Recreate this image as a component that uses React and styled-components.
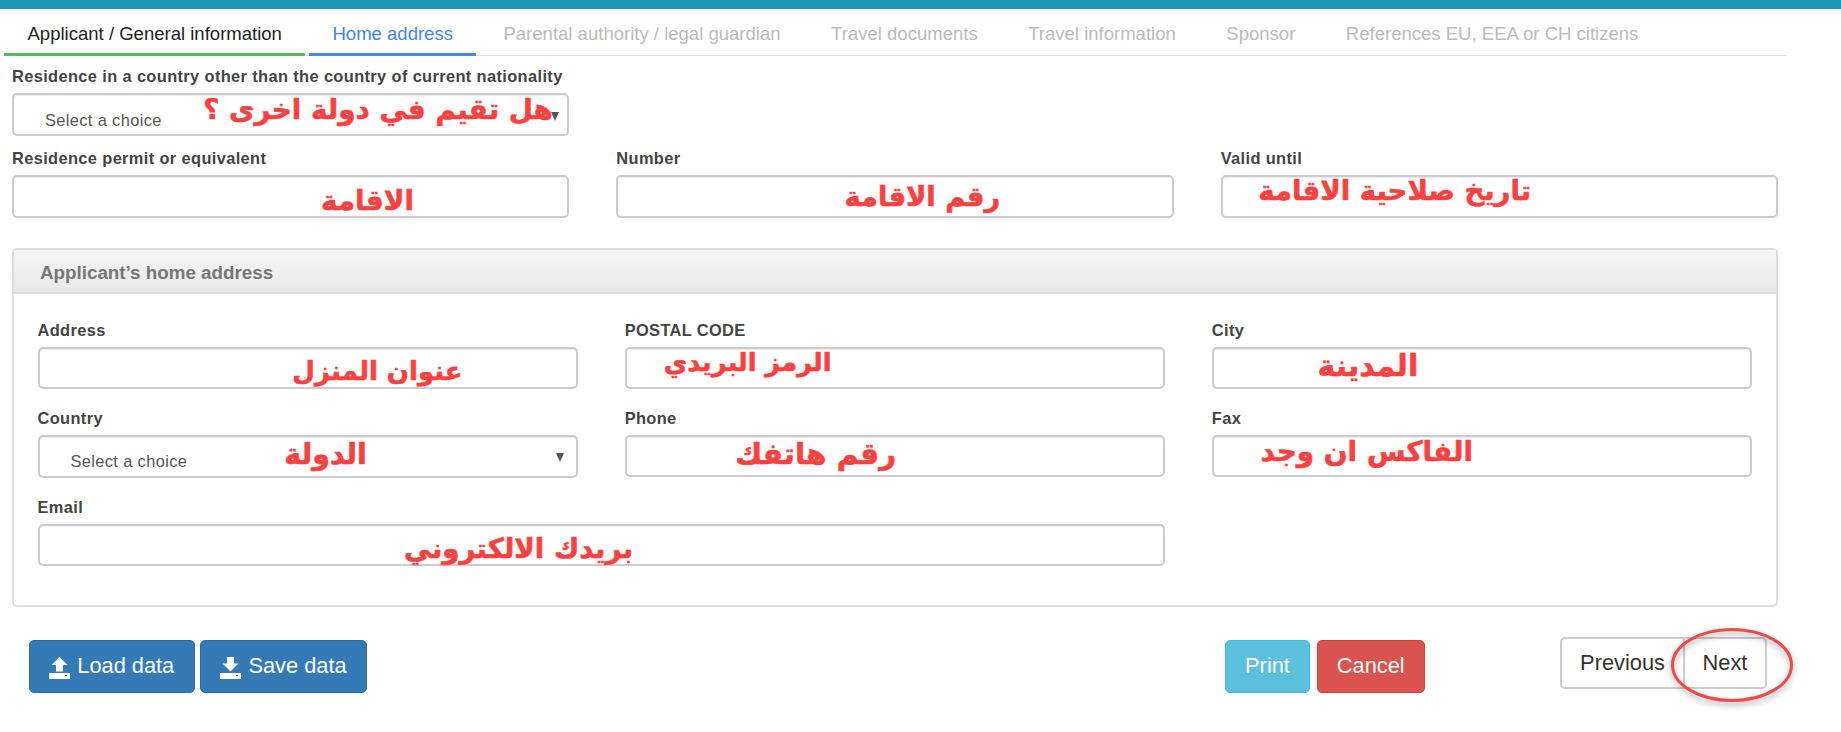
import React from "react";
import styled, { createGlobalStyle } from "styled-components";

const GlobalStyle = createGlobalStyle`
  html, body {
    margin: 0;
    padding: 0;
    background: #fff;
    font-family: "Liberation Sans", Arial, sans-serif;
  }
  * {
    box-sizing: border-box;
  }
`;

const TopBar = styled.div`
  height: 9px;
  background: #1a96b8;
`;

const Tabs = styled.ul`
  display: flex;
  gap: 3.5px;
  list-style: none;
  margin: 0 0 0 4px;
  padding: 0;
  width: 1782px;
  height: 46.5px;
  border-bottom: 1.5px solid #ddd;
`;

const Tab = styled.li`
  height: 47px;
  padding: 0 23.5px;
  font-size: 18.55px;
  line-height: 50px;
  white-space: nowrap;
  border-bottom: 3px solid ${(p) => p.$line || "transparent"};
  color: ${(p) => p.$color || "#bbb"};
`;

const Form = styled.form`
  display: block;
  padding: 10.5px 63px 30px 12px;
`;

const Label = styled.label`
  display: block;
  height: 20px;
  margin-bottom: 7px;
  font-size: 16.4px;
  line-height: 20px;
  font-weight: bold;
  letter-spacing: 0.37px;
  color: #444;
  white-space: nowrap;
`;

const Grid = styled.div`
  display: grid;
  grid-template-columns: repeat(3, 1fr);
  column-gap: 47px;
  row-gap: ${(p) => p.$rowGap || 30}px;
`;

const Field = styled.div`
  grid-column: span ${(p) => p.$span || 1};
  min-width: 0;
`;

const InputWrap = styled.div`
  position: relative;
`;

const Input = styled.input`
  display: block;
  width: 100%;
  height: 42.5px;
  padding: 0 14px;
  border: 2px solid #ccc;
  border-radius: 5px;
  background: #fff;
  outline: none;
  box-shadow: inset 0 1px 1px rgba(0, 0, 0, 0.075);
`;

const Select = styled.select`
  display: block;
  width: 100%;
  height: 43px;
  padding: 10px 0 0 31px;
  border: 2px solid #ccc;
  border-radius: 5px;
  background: #fff;
  appearance: none;
  outline: none;
  font-family: inherit;
  font-size: 16.4px;
  letter-spacing: 0.37px;
  color: #555;
  box-shadow: inset 0 1px 1px rgba(0, 0, 0, 0.075);
`;

const Caret = styled.span`
  position: absolute;
  right: ${(p) => p.$right}px;
  top: ${(p) => p.$top}px;
  width: 0;
  height: 0;
  border-left: 4.5px solid transparent;
  border-right: 4.5px solid transparent;
  border-top: 9px solid #555;
`;

// red hand-written hints lying over the inputs
const Hint = styled.span`
  position: absolute;
  left: ${(p) => p.$cx}px;
  top: ${(p) => p.$cy}px;
  transform: translate(-50%, -50%);
  direction: rtl;
  font-family: "DejaVu Sans", sans-serif;
  font-weight: bold;
  font-size: ${(p) => p.$size}px;
  line-height: 1;
  color: #ff4040;
  -webkit-text-stroke: 0.6px #ff4040;
  white-space: nowrap;
  pointer-events: none;
`;

const TopRows = styled.div`
  display: grid;
  row-gap: 12px;
`;

const Panel = styled.section`
  margin-top: 30px;
  height: 359.5px;
  border: 2px solid #ddd;
  border-radius: 5px;
`;

const PanelHead = styled.div`
  height: 44px;
  padding-left: 26px;
  border-bottom: 2px solid #ddd;
  background: linear-gradient(#f5f5f5, #e8e8e8);
  font-size: 18.8px;
  line-height: 45px;
  font-weight: bold;
  color: #777;
`;

const PanelBody = styled.div`
  padding: 26px 24px 0 23.5px;
`;

const Footer = styled.div`
  display: flex;
  align-items: flex-start;
  padding: 33px 0 0 17px;
  margin-right: 11px;
`;

const Group = styled.div`
  display: flex;
  gap: ${(p) => p.$gap}px;
  margin-left: ${(p) => p.$offset || 0}px;
`;

const Button = styled.button`
  display: flex;
  align-items: center;
  justify-content: center;
  gap: 7px;
  height: 53px;
  width: ${(p) => p.$w}px;
  padding: 0 0 2px;
  border: 1.5px solid ${(p) => p.$border};
  border-radius: 5px;
  background: ${(p) => p.$bg};
  color: #fff;
  font-family: inherit;
  font-size: 21.8px;
`;

const Icon = styled.svg`
  flex: none;
  margin-top: 5px;
`;

const Pager = styled.div`
  position: relative;
  display: flex;
  margin: -3.5px 0 0 auto;
`;

const PagerButton = styled.button`
  height: 52.5px;
  width: ${(p) => p.$w}px;
  margin-left: ${(p) => (p.$joined ? -2 : 0)}px;
  padding: 0;
  border: 2px solid #ccc;
  border-radius: ${(p) => (p.$joined ? "0 5px 5px 0" : "5px 0 0 5px")};
  background: #fff;
  color: #333;
  font-family: inherit;
  font-size: 21.8px;
`;

const Circle = styled.svg`
  position: absolute;
  left: 111px;
  top: -9px;
  width: 122px;
  height: 74px;
  overflow: visible;
  filter: drop-shadow(0 3px 3px rgba(0, 0, 0, 0.35));
  pointer-events: none;
`;

const UploadIcon = () => (
  <Icon width="21" height="22" viewBox="0 0 21 22">
    <path fill="#fff" d="M10.5 0 L18.5 8 H14 V14.5 H7 V8 H2.5 Z" />
    <rect fill="#fff" x="0" y="16" width="21" height="6" />
    <rect fill="#337ab7" x="16" y="18" width="2" height="1" />
  </Icon>
);

const DownloadIcon = () => (
  <Icon width="21" height="22" viewBox="0 0 21 22">
    <path fill="#fff" d="M7 0 H14 V6.5 H18.5 L10.5 14.5 L2.5 6.5 H7 Z" />
    <rect fill="#fff" x="0" y="16" width="21" height="6" />
    <rect fill="#337ab7" x="16" y="18" width="2" height="1" />
  </Icon>
);

const TABS = [
  { text: "Applicant / General information", line: "#5cb85c", color: "#222" },
  { text: "Home address", line: "#4285f4", color: "#4285f4" },
  { text: "Parental authority / legal guardian" },
  { text: "Travel documents" },
  { text: "Travel information" },
  { text: "Sponsor" },
  { text: "References EU, EEA or CH citizens" },
];

function TextField({ label, hint, span, cx, cy, size }) {
  return (
    <Field $span={span}>
      <Label>{label}</Label>
      <InputWrap>
        <Input type="text" />
        <Hint $cx={cx} $cy={cy} $size={size}>{hint}</Hint>
      </InputWrap>
    </Field>
  );
}

function SelectField({ label, hint, cx, cy, size, caretRight, caretTop }) {
  return (
    <Field>
      <Label>{label}</Label>
      <InputWrap>
        <Select defaultValue="">
          <option value="">Select a choice</option>
        </Select>
        <Caret $right={caretRight} $top={caretTop} />
        <Hint $cx={cx} $cy={cy} $size={size}>{hint}</Hint>
      </InputWrap>
    </Field>
  );
}

export default function App() {
  return (
    <>
      <GlobalStyle />
      <TopBar />
      <Tabs>
        {TABS.map((t) => (
          <Tab key={t.text} $line={t.line} $color={t.color}>{t.text}</Tab>
        ))}
      </Tabs>
      <Form>
        <TopRows>
          <Grid>
            <SelectField
              label="Residence in a country other than the country of current nationality"
              hint="هل تقيم في دولة اخرى ؟"
              cx={366}
              cy={17}
              size={27.8}
              caretRight={10.5}
              caretTop={19}
            />
          </Grid>
          <Grid>
            <TextField label="Residence permit or equivalent" hint="الاقامة" cx={355.5} cy={25.7} size={27.8} />
            <TextField label="Number" hint="رقم الاقامة" cx={306} cy={21.7} size={27.3} />
            <TextField label="Valid until" hint="تاريخ صلاحية الاقامة" cx={174} cy={16.3} size={27.5} />
          </Grid>
        </TopRows>
        <Panel>
          <PanelHead>Applicant’s home address</PanelHead>
          <PanelBody>
            <Grid $rowGap={18.8}>
              <TextField label="Address" hint="عنوان المنزل" cx={340} cy={24} size={26} />
              <TextField label="POSTAL CODE" hint="الرمز البريدي" cx={123} cy={16.5} size={25.6} />
              <TextField label="City" hint="المدينة" cx={156} cy={19} size={30} />
              <SelectField label="Country" hint="الدولة" cx={288} cy={20} size={28.5} caretRight={14} caretTop={18} />
              <TextField label="Phone" hint="رقم هاتفك" cx={191} cy={20.3} size={29.5} />
              <TextField label="Fax" hint="الفاكس ان وجد" cx={155} cy={17} size={27.9} />
              <TextField label="Email" hint="بريدك الالكتروني" span={2} cx={481} cy={25} size={27.6} />
            </Grid>
          </PanelBody>
        </Panel>
        <Footer>
          <Group $gap={5.5}>
            <Button type="button" $w={165.5} $bg="#337ab7" $border="#2e6da4">
              <UploadIcon />
              Load data
            </Button>
            <Button type="button" $w={167} $bg="#337ab7" $border="#2e6da4">
              <DownloadIcon />
              Save data
            </Button>
          </Group>
          <Group $offset={858} $gap={7}>
            <Button type="button" $w={85} $bg="#5bc0de" $border="#46b8da">Print</Button>
            <Button type="button" $w={107.5} $bg="#d9534f" $border="#d43f3a">Cancel</Button>
          </Group>
          <Pager>
            <PagerButton type="button" $w={125}>Previous</PagerButton>
            <PagerButton type="button" $w={84} $joined>Next</PagerButton>
            <Circle viewBox="0 0 122 74">
              <ellipse cx="61" cy="37" rx="59.5" ry="35.5" fill="none" stroke="#f24848" strokeWidth="3" />
            </Circle>
          </Pager>
        </Footer>
      </Form>
    </>
  );
}
